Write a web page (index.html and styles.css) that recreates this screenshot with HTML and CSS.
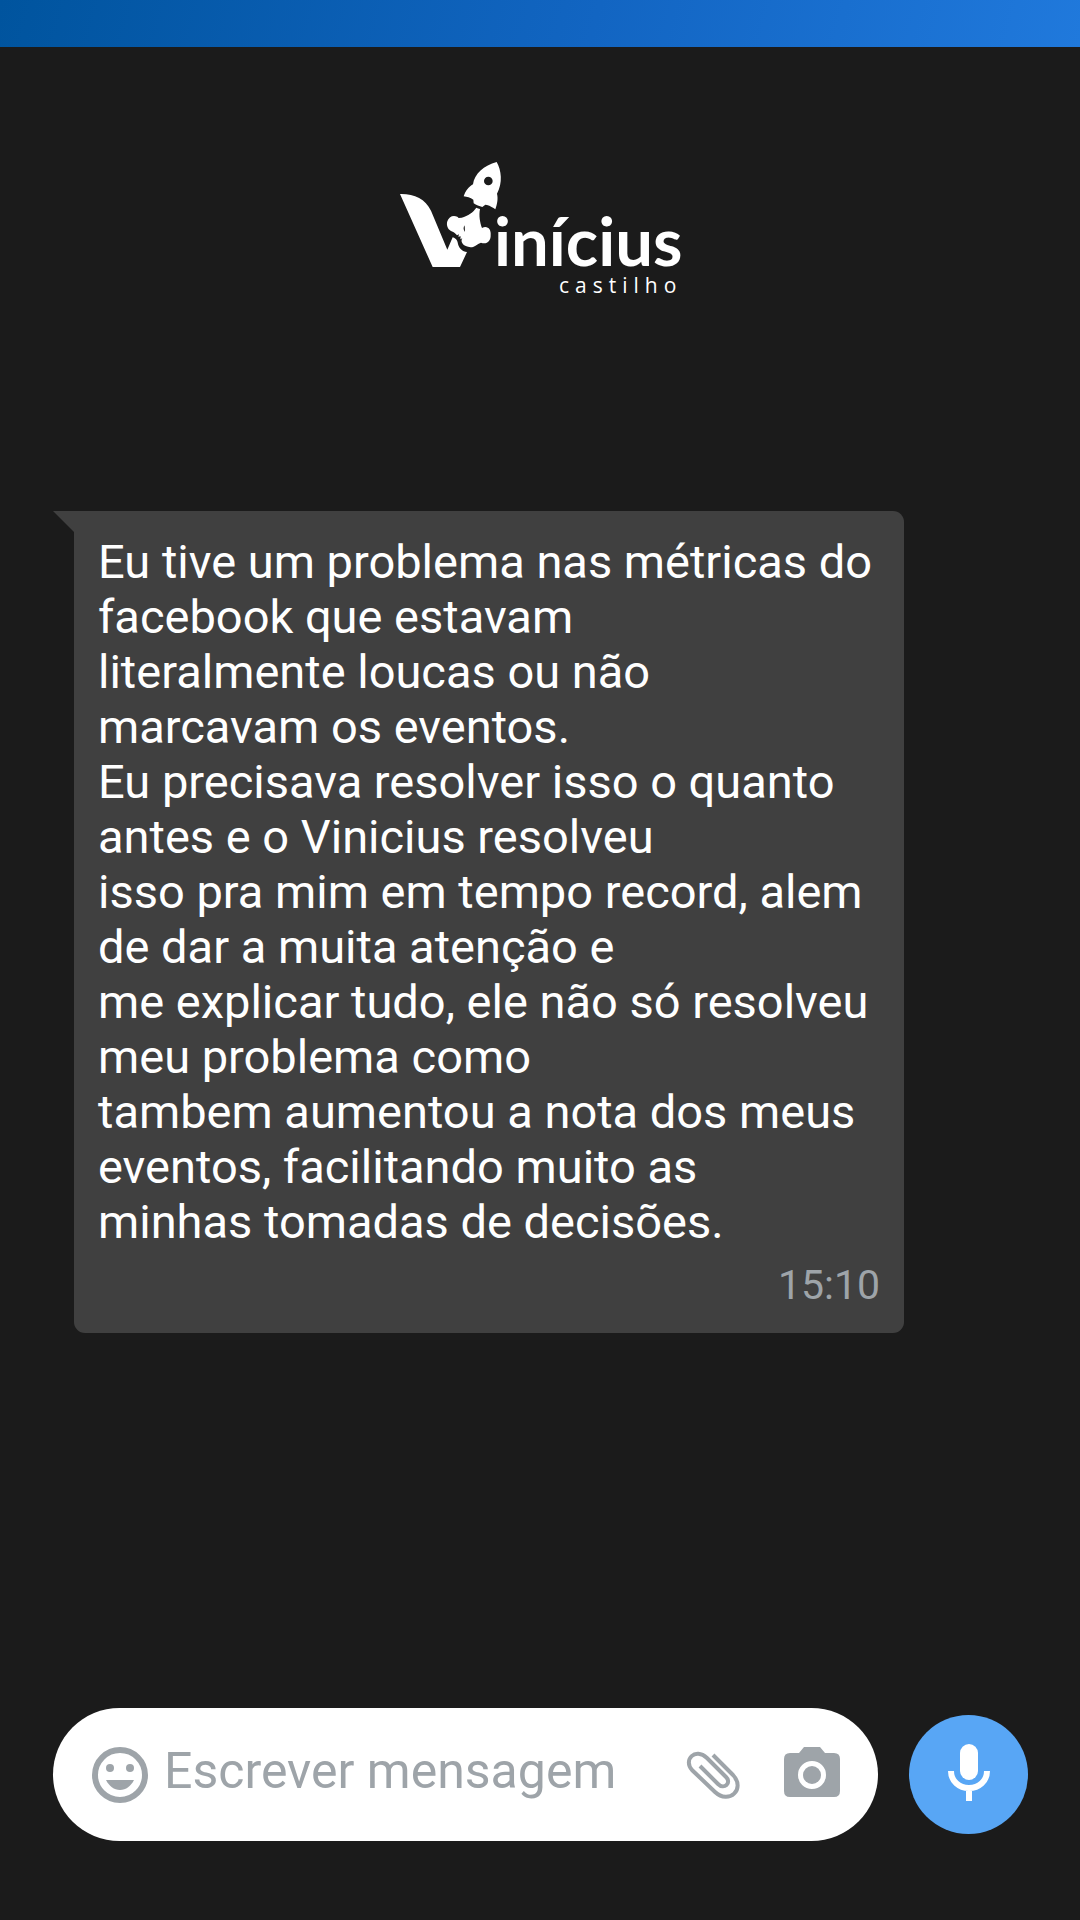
FILE: index.html
```html
<!DOCTYPE html>
<html lang="pt-BR">
<head>
    <meta charset="UTF-8">
    <meta name="viewport" content="width=device-width, initial-scale=1">
    <title>Vinícius Castilho</title>
    <link rel="stylesheet" href="styles.css">
</head>
<body>
<div class="topbar"></div>

<header class="header">
    <svg class="logo" viewBox="0 0 280 136">
        <!-- V + foguete -->
        <g transform="translate(-10 -12) scale(.33333)">
            <path d="M30 132C72 131 106 146 123 182L172 299L188 262C200 266 203 274 204 282C208 296 217 304 231 306L210 351H128Z"/>
            <path fill-rule="evenodd" d="M320 36C334 60 339 98 321 131C325 146 321 164 316 178C309 173 301 168 291 165L286 164L277 171C268 169 259 165 251 160L250 149C241 143 231 140 221 139C226 124 236 110 249 103C253 72 282 46 320 36ZM295 80A13 13 0 1 0 295 106A13 13 0 1 0 295 80Z"/>
            <path d="M259 173Q264 176 270 177C266 196 270 218 276 234C292 225 304 238 302 255C303 274 289 285 273 278C262 281 260 287 251 290C240 294 223 290 217 280C213 274 215 267 217 265L211 268L212 259L205 260L207 253L201 256C196 250 192 246 188 245C174 242 168 226 172 214C176 200 189 194 202 200L206 204L215 203C234 198 250 186 259 173Z"/>
            <path class="logo-cut" d="M224 226C219 233 220 240 225 246Z"/>
        </g>
        <text class="logo-name" x="94" y="104">inícius</text>
        <text class="logo-sub" x="159" y="131">castilho</text>
    </svg>
</header>

<main class="chat">
    <div class="bubble">
        <p class="bubble-text">
            Eu tive um problema nas métricas do facebook que estavam<br>
            literalmente loucas ou não marcavam os eventos.<br>
            Eu precisava resolver isso o quanto antes e o Vinicius resolveu<br>
            isso pra mim em tempo record, alem de dar a muita atenção e<br>
            me explicar tudo, ele não só resolveu meu problema como<br>
            tambem aumentou a nota dos meus eventos, facilitando muito as<br>
            minhas tomadas de decisões.
        </p>
        <time class="bubble-time">15:10</time>
    </div>
</main>

<form class="composer">
    <div class="field">
        <button type="button" class="icon-btn" aria-label="Emoji">
            <svg width="56" height="56" viewBox="0 0 56 56">
                <circle cx="28" cy="28" r="25" fill="none" stroke="currentColor" stroke-width="6"/>
                <circle cx="18" cy="21" r="4"/>
                <circle cx="38" cy="21" r="4"/>
                <path d="M14 33H42C39 39 34 43 28 43S17 39 14 33Z"/>
            </svg>
        </button>
        <input class="field-input" type="text" placeholder="Escrever mensagem" aria-label="Escrever mensagem">
        <button type="button" class="icon-btn clip" aria-label="Anexar">
            <svg width="56" height="56" viewBox="0 0 56 56">
                <path d="M14 19L32 37C38 43 46 36 40 30L21 11C9 0-3 13 6 23L29 45C43 58 60 42 47 28L27 8" fill="none" stroke="currentColor" stroke-width="4"/>
            </svg>
        </button>
        <button type="button" class="icon-btn" aria-label="Câmera">
            <svg width="56" height="56" viewBox="0 0 56 56">
                <path fill-rule="evenodd" d="M20 0H36L41 6H50Q56 6 56 12V44Q56 50 50 50H6Q0 50 0 44V12Q0 6 6 6H15ZM28 14A14 14 0 1 0 28 42A14 14 0 1 0 28 14Z"/>
                <circle cx="28" cy="28" r="9"/>
            </svg>
        </button>
    </div>
    <button type="button" class="mic" aria-label="Gravar áudio">
        <svg width="42" height="62" viewBox="0 0 42 62">
            <rect x="12" y="0" width="18" height="36" rx="9"/>
            <path d="M3 27C3 37 11 44 21 44S39 37 39 27M21 44V57" fill="none" stroke="currentColor" stroke-width="6"/>
        </svg>
    </button>
</form>
</body>
</html>
```
FILE: styles.css
```css
* {
    margin: 0;
    padding: 0;
    box-sizing: border-box;
}

body {
    min-height: 100vh;
    display: flex;
    flex-direction: column;
    background: #1b1b1b;
    color: #fff;
    font-family: Roboto, "Liberation Sans", sans-serif;
}

svg {
    display: block;
    fill: currentColor;
}

button {
    border: none;
    background: none;
    cursor: pointer;
}

.topbar {
    height: 47px;
    background: linear-gradient(105deg, #00549e, #1265c2 55%, #2079dc);
}

.header {
    display: flex;
    justify-content: center;
    padding: 115px 52px 0;
}

.logo {
    width: 280px;
    height: 136px;
    overflow: visible;
}

.logo-name {
    font-family: Lato, sans-serif;
    font-size: 67px;
    font-weight: 700;
}

.logo-sub {
    font-family: "Open Sans", sans-serif;
    font-size: 21px;
    letter-spacing: 6px;
}

.logo-cut {
    fill: #1b1b1b;
}

.chat {
    padding: 213px 176px 80px 74px;
}

.bubble {
    position: relative;
    padding: 23px 24px;
    background: #404040;
    border-radius: 0 11px 11px 11px;
}

.bubble::before {
    content: "";
    position: absolute;
    top: 0;
    left: -21px;
    border-top: 21px solid #404040;
    border-left: 21px solid transparent;
}

.bubble-text {
    font-size: 47px;
    line-height: 55px;
}

.bubble-time {
    display: block;
    margin-top: 12px;
    font-size: 41px;
    line-height: 49px;
    text-align: right;
    color: #9ea4a9;
}

.composer {
    margin-top: auto;
    display: flex;
    align-items: center;
    gap: 31px;
    padding: 0 52px 79px 53px;
}

.field {
    flex: 1;
    min-width: 0;
    height: 133px;
    display: flex;
    align-items: center;
    padding: 0 38px 0 39px;
    background: #fff;
    border-radius: 67px;
    color: #9ea4a9;
}

.icon-btn {
    flex: none;
    color: #9ea4a9;
}

.field-input {
    flex: 1;
    min-width: 0;
    height: 80px;
    margin: 0 16px;
    padding-bottom: 8px;
    border: none;
    outline: none;
    background: none;
    color: #404040;
    font: 50px Roboto, "Liberation Sans", sans-serif;
}

.field-input::placeholder {
    color: #9ea4a9;
    opacity: 1;
}

.clip {
    margin-right: 42px;
}

.mic {
    flex: none;
    width: 119px;
    height: 119px;
    display: flex;
    align-items: center;
    justify-content: center;
    border-radius: 50%;
    background: #58a6f5;
    color: #fff;
}
```
